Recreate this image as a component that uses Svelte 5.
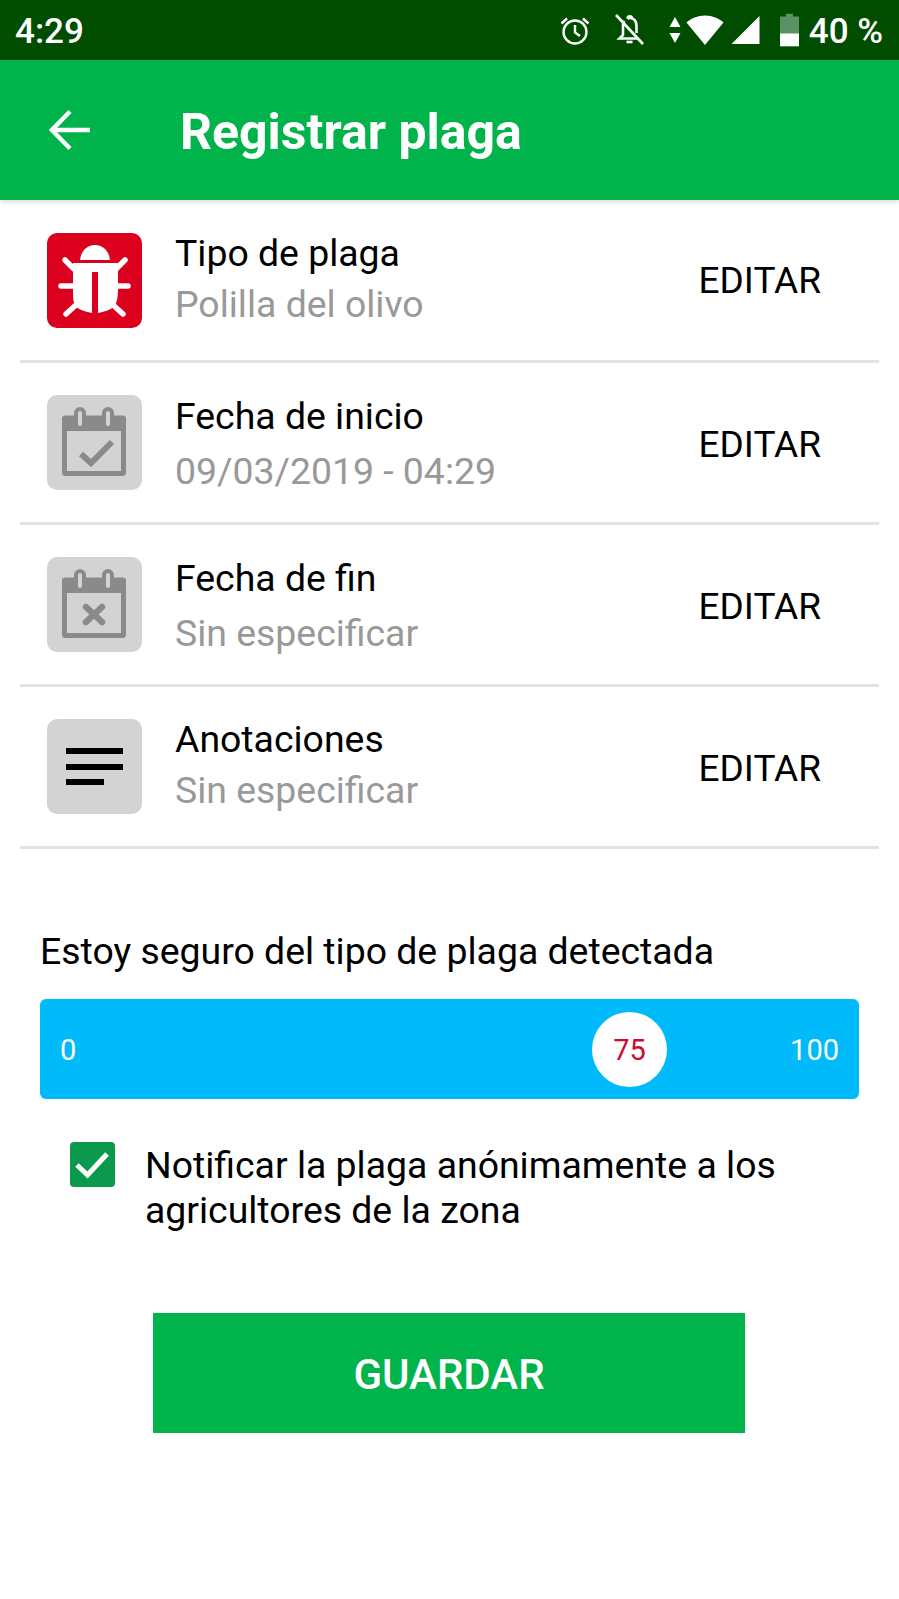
<script>
    const rows = [
        { title: "Tipo de plaga", value: "Polilla del olivo", icon: "bug", tight: true },
        { title: "Fecha de inicio", value: "09/03/2019 - 04:29", icon: "check", tight: false },
        { title: "Fecha de fin", value: "Sin especificar", icon: "cross", tight: false },
        { title: "Anotaciones", value: "Sin especificar", icon: "notes", tight: true },
    ];
</script>

<div class="screen">
    <div class="status-bar">
        <span class="clock">4:29</span>
        <div class="status-icons">
            <!-- alarma -->
            <svg class="st alarm" width="32" height="32" viewBox="0 0 32 32" fill="none" stroke="#fff" stroke-width="2.4">
                <circle cx="16" cy="18" r="11.5" />
                <path d="M16 11v7.5l5 3.5M2.5 9.5 8 4.5M29.5 9.5 24 4.5" />
            </svg>
            <!-- campana tachada -->
            <svg class="st bell" width="34" height="34" viewBox="0 0 34 34" fill="none" stroke="#fff" stroke-width="2.6">
                <path d="M10 12.5c0-2 .6-3.400 1.500-4.500M14.500 5.500c3.500-1.500 9 .5 9 7V20M10 12.500V22l-3.500 3.500H25" />
                <path d="M14.500 5.500c0-3 4.500-3 4.500 0" />
                <path d="M13.500 29h6" />
                <path d="M3 2l27 29" />
            </svg>
            <svg class="st arrows" width="12" height="28" viewBox="0 0 12 28" fill="#fff">
                <path d="M6 1l5.500 10H.5zM6 27 .5 17h11z" />
            </svg>
            <svg class="st wifi" width="38" height="32" viewBox="0 0 38 32" fill="#fff">
                <path d="M19 31 .5 8.500C5 4.500 11.500 1.500 19 1.500s14 3 18.500 7z" />
            </svg>
            <svg class="st signal" width="29" height="30" viewBox="0 0 29 30" fill="#fff">
                <path d="M28.500 1v28H.5z" />
            </svg>
            <!-- batería -->
            <svg class="st battery" width="19" height="33" viewBox="0 0 19 33">
                <path d="M6 0h7v3h6v30H0V3h6z" fill="#5c9163" />
                <path d="M0 20h19v13H0z" fill="#fff" />
            </svg>
            <span class="battery-text">40 %</span>
        </div>
    </div>

    <header class="app-bar">
        <svg class="back" width="42" height="42" viewBox="0 0 42 42" fill="none" stroke="#fff" stroke-width="4.4">
            <path d="M41 21H3M21 2.500 2.800 21 21 39.500" />
        </svg>
        <h1>Registrar plaga</h1>
    </header>

    <ul class="rows">
        {#each rows as row}
            <li class="row">
                <div class="icon" class:red={row.icon === "bug"}>
                    {#if row.icon === "bug"}
                        <svg width="95" height="95" viewBox="0 0 95 95" fill="#fff">
                            <path d="M33 27c1-9 7-15 15-15s14 6 15 15z" />
                            <path d="M26 30h45v25c0 9-1 15-4 19-4 3-10 5-16 6V39h-6v41c-6-1-12-3-16-6-3-4-3-10-3-19z" />
                            <g fill="none" stroke="#fff" stroke-width="5.500" stroke-linecap="round">
                                <path d="M18 27l9 9M78 27l-9 9M14 53h13M81 53H68M19 81l11-10M76 81 65 71" />
                            </g>
                        </svg>
                    {:else if row.icon === "notes"}
                        <svg width="95" height="95" viewBox="0 0 95 95" fill="#000">
                            <path d="M19 29h57v6H19zM19 45h57v6H19zM19 60h38v6H19z" />
                        </svg>
                    {:else}
                        <svg width="95" height="95" viewBox="0 0 95 95" fill="none" stroke="#8a8a8a">
                            <path d="M18 21h59c1 0 2 1 2 2v13H15V23c0-1 1-2 3-2z" fill="#8a8a8a" stroke="none" />
                            <rect x="17.500" y="23" width="59" height="55.500" rx="1" stroke-width="5" />
                            <rect x="29" y="14" width="8" height="19" rx="4" fill="#d3d3d3" stroke-width="4" />
                            <rect x="57" y="14" width="8" height="19" rx="4" fill="#d3d3d3" stroke-width="4" />
                            {#if row.icon === "check"}
                                <path d="M34 59l10 9 21-21" stroke-width="6" />
                            {:else}
                                <path d="M39 50l16 15M55 50 39 65" stroke-width="6.500" stroke-linecap="round" />
                            {/if}
                        </svg>
                    {/if}
                </div>
                <div class="row-text" class:tight={row.tight}>
                    <div class="row-title">{row.title}</div>
                    <div class="row-value">{row.value}</div>
                </div>
                <span class="edit">EDITAR</span>
            </li>
        {/each}
    </ul>

    <p class="certainty">Estoy seguro del tipo de plaga detectada</p>

    <div class="slider">
        <span>0</span>
        <span>100</span>
        <span class="thumb">75</span>
    </div>

    <div class="notify">
        <span class="checkbox">
            <svg width="45" height="45" viewBox="0 0 45 45" fill="none" stroke="#fff" stroke-width="5">
                <path d="M7 23l10.500 10L37 12" />
            </svg>
        </span>
        <span class="notify-text">Notificar la plaga anónimamente a los agricultores de la zona</span>
    </div>

    <button class="save">GUARDAR</button>
</div>

<style>
    :global(body) {
        background: #fff;
    }

    .screen {
        width: 899px;
        height: 1599px;
        overflow: hidden;
        font-family: Roboto, "Liberation Sans", sans-serif;
        color: #000;
    }

    .status-bar {
        height: 60px;
        background: #004d00;
        color: #fff;
        display: flex;
        justify-content: space-between;
        align-items: center;
        padding: 0 16px 0 15px;
        font-size: 35px;
        font-weight: 500;
    }

    .clock,
    .battery-text {
        padding-top: 2px;
    }

    .status-icons {
        position: relative;
        width: 327px;
        height: 60px;
        display: flex;
        justify-content: flex-end;
        align-items: center;
    }

    /* Iconos de sistema, cada uno en su sitio de la barra. */
    .st {
        position: absolute;
        top: 50%;
        transform: translateY(-50%);
    }

    .alarm { left: 3px; }
    .bell { left: 57px; }
    .arrows { left: 113px; }
    .wifi { left: 130px; }
    .signal { left: 175px; }
    .battery { left: 224px; }

    .app-bar {
        height: 140px;
        background: #00b34b;
        color: #fff;
        display: flex;
        align-items: center;
        box-shadow: 0 2px 5px rgba(0, 0, 0, 0.15);
        position: relative;
    }

    .back {
        margin-left: 49px;
    }

    h1 {
        margin: 4px 0 0 89px;
        font-size: 50px;
        font-weight: 700;
    }

    .rows {
        list-style: none;
        margin: 0 20px;
        padding: 1px 0 0;
    }

    .row {
        height: 159px;
        border-bottom: 3px solid #e2e2e2;
        display: flex;
        align-items: center;
        padding-left: 27px;
    }

    .icon {
        width: 95px;
        height: 95px;
        border-radius: 10px;
        background: #d3d3d3;
        flex: none;
    }

    .icon svg {
        display: block;
    }

    .icon.red {
        background: #da001e;
    }

    .row-text {
        flex: 1;
        margin-left: 33px;
        padding-top: 2px;
    }

    .row-text.tight {
        padding: 0 0 5px;
    }

    .row-title {
        font-size: 37.4px;
        line-height: 48px;
    }

    .row-value {
        font-size: 37.4px;
        line-height: 48px;
        color: #999;
        margin-top: 7px;
    }

    .tight .row-value {
        margin-top: 3px;
    }

    .edit {
        font-size: 37px;
        margin-right: 58px;
        padding-top: 3px;
    }

    .row:first-child .edit {
        padding-top: 0;
    }

    .certainty {
        margin: 78px 0 0 40px;
        font-size: 37.4px;
        line-height: 48px;
    }

    .slider {
        position: relative;
        box-sizing: border-box;
        margin: 24px 40px 0;
        height: 100px;
        background: #00bafa;
        border-radius: 6px;
        color: #fff;
        font-size: 29px;
        display: flex;
        justify-content: space-between;
        align-items: center;
        padding: 2px 20px 0;
    }

    .thumb {
        position: absolute;
        box-sizing: border-box;
        left: 552px;
        top: 13px;
        width: 75px;
        height: 75px;
        padding-top: 1px;
        border-radius: 50%;
        background: #fff;
        color: #cf0a2c;
        display: flex;
        align-items: center;
        justify-content: center;
    }

    .notify {
        display: flex;
        margin: 43px 60px 0 70px;
    }

    .checkbox {
        width: 45px;
        height: 45px;
        border-radius: 4px;
        background: #0b9a4d;
        flex: none;
    }

    .checkbox svg {
        display: block;
    }

    .notify-text {
        margin-left: 30px;
        font-size: 37.4px;
        line-height: 45px;
        padding-top: 1px;
    }

    .save {
        display: block;
        width: 592px;
        height: 120px;
        margin: 80px 0 0 153px;
        padding-top: 4px;
        border: 0;
        background: #00b34b;
        color: #fff;
        font-family: inherit;
        font-size: 42px;
        font-weight: 500;
    }
</style>
